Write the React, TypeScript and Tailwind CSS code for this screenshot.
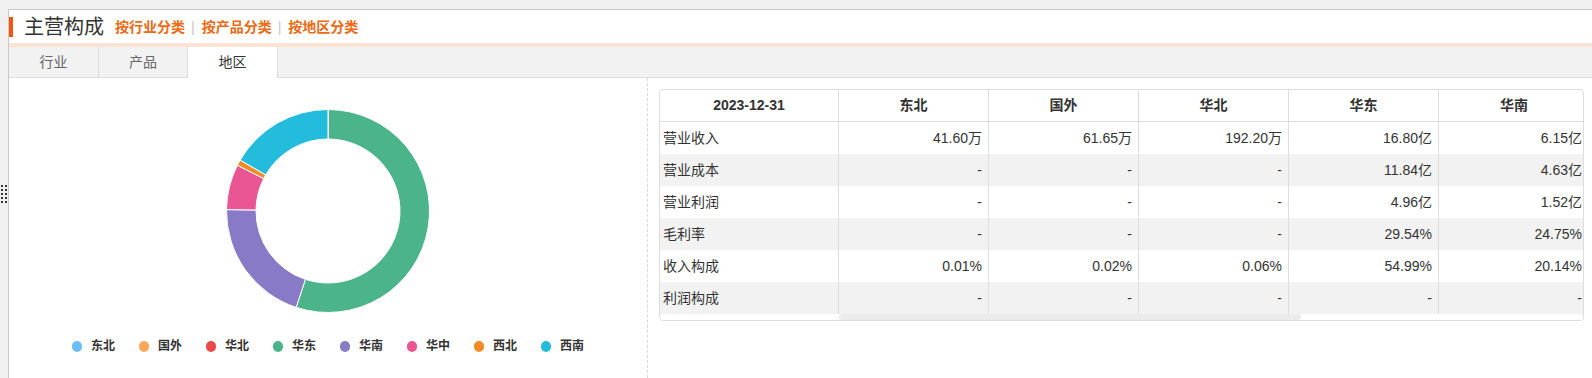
import React from 'react';

const FONT = { fontFamily: '"Liberation Sans", Arial, "Noto Sans CJK SC", sans-serif' };

const regions = [
  { name: '东北', color: '#6dbdf7', share: 0.01 },
  { name: '国外', color: '#fba85b', share: 0.02 },
  { name: '华北', color: '#ec4a4a', share: 0.06 },
  { name: '华东', color: '#4bb48a', share: 54.99 },
  { name: '华南', color: '#887ac6', share: 20.14 },
  { name: '华中', color: '#ea5693', share: 7.21 },
  { name: '西北', color: '#f98b26', share: 0.93 },
  { name: '西南', color: '#23bcdd', share: 16.64 },
];

const rowLabels = ['营业收入', '营业成本', '营业利润', '毛利率', '收入构成', '利润构成'];

// only the columns visible at scroll position 0
const columns: { name: string; values: string[] }[] = [
  { name: '东北', values: ['41.60万', '-', '-', '-', '0.01%', '-'] },
  { name: '国外', values: ['61.65万', '-', '-', '-', '0.02%', '-'] },
  { name: '华北', values: ['192.20万', '-', '-', '-', '0.06%', '-'] },
  { name: '华东', values: ['16.80亿', '11.84亿', '4.96亿', '29.54%', '54.99%', '-'] },
  { name: '华南', values: ['6.15亿', '4.63亿', '1.52亿', '24.75%', '20.14%', '-'] },
];

function Donut() {
  const cx = 105;
  const cy = 105;
  const ro = 101.5;
  const ri = 72;
  const total = regions.reduce((s, r) => s + r.share, 0);
  let acc = 0;
  const pt = (r: number, a: number) => {
    const rad = (a - 90) * (Math.PI / 180);
    return [cx + r * Math.cos(rad), cy + r * Math.sin(rad)];
  };
  return (
    <svg width="210" height="210" viewBox="0 0 210 210">
      {regions.map((r) => {
        const a0 = (acc / total) * 360;
        acc += r.share;
        const a1 = (acc / total) * 360;
        const large = a1 - a0 > 180 ? 1 : 0;
        const [x0, y0] = pt(ro, a0);
        const [x1, y1] = pt(ro, a1);
        const [x2, y2] = pt(ri, a1);
        const [x3, y3] = pt(ri, a0);
        const d = `M${x0} ${y0} A${ro} ${ro} 0 ${large} 1 ${x1} ${y1} L${x2} ${y2} A${ri} ${ri} 0 ${large} 0 ${x3} ${y3} Z`;
        return <path key={r.name} d={d} fill={r.color} stroke="#fff" strokeWidth="1" />;
      })}
    </svg>
  );
}

function Handle() {
  const ys = [185, 189, 193, 197, 201];
  return (
    <div className="absolute left-0 top-0">
      {ys.map((y) => (
        <React.Fragment key={y}>
          <span className="absolute w-[2px] h-[2px] bg-[#333]" style={{ left: 1, top: y }} />
          <span className="absolute w-[2px] h-[2px] bg-[#333]" style={{ left: 5, top: y }} />
        </React.Fragment>
      ))}
    </div>
  );
}

export default function App() {
  return (
    <div className="relative w-[1592px] h-[378px] bg-[#f0f0f0] overflow-hidden text-[#333]" style={FONT}>
      <Handle />
      <div className="ml-[8px] mt-[9px] h-[369px] bg-white border-l border-t border-[#c9c9c9]">
        {/* title */}
        <div className="h-[33px] flex items-center">
          <div className="w-[4px] h-[20px] bg-[#ee5612]" />
          <span className="ml-[11px] text-[20px] leading-none text-[#333]">主营构成</span>
          <div className="ml-[11px] flex items-center text-[14px] font-bold text-[#ee6a12] mt-[2px]">
            <span>按行业分类</span>
            <span className="ml-[6px] mr-[7px] font-normal text-[#c8c8c8]">|</span>
            <span>按产品分类</span>
            <span className="ml-[6px] mr-[7px] font-normal text-[#c8c8c8]">|</span>
            <span>按地区分类</span>
          </div>
        </div>
        <div className="h-[4px] bg-[#fde3d2]" />
        {/* tabs */}
        <div className="h-[31px] flex bg-[#f2f2f2] border-b border-[#dddddd] text-[14px]">
          <div className="w-[90px] border-r border-[#dddddd] flex items-center justify-center text-[#666]">行业</div>
          <div className="w-[89px] border-r border-[#dddddd] flex items-center justify-center text-[#666]">产品</div>
          <div className="w-[90px] h-[31px] border-r border-[#dddddd] bg-white flex items-center justify-center text-[#333]">地区</div>
        </div>
        {/* body */}
        <div className="flex h-[300px]">
          <div className="w-[639px] shrink-0 border-r border-dashed border-[#d8d8d8] flex flex-col items-center">
            <div className="mt-[28px]">
              <Donut />
            </div>
            <div className="mt-[22px] flex items-center">
              {regions.map((r, i) => (
                <div key={r.name} className={`flex items-center ${i > 0 ? 'ml-[24px]' : ''}`}>
                  <span className="w-[10px] h-[11px] rounded-full" style={{ background: r.color }} />
                  <span className="ml-[9px] text-[12px] font-bold text-[#333] leading-[16px]">{r.name}</span>
                </div>
              ))}
            </div>
          </div>
          <div className="pl-[11px] pt-[11px]">
            <div className="w-[925px] border border-[#dddddd] rounded-[4px] overflow-hidden text-[14px]">
              <div className="flex">
                {/* fixed column */}
                <div className="w-[179px] shrink-0 border-r border-[#dddddd]">
                  <div className="h-[32px] border-b border-[#dddddd] flex items-center justify-center font-bold">2023-12-31</div>
                  {rowLabels.map((l, i) => (
                    <div key={l} className={`h-[32px] flex items-center pl-[3px] ${i % 2 === 1 ? 'bg-[#f2f2f2]' : 'bg-white'}`}>{l}</div>
                  ))}
                </div>
                {/* scroll area */}
                <div className="flex-1 flex overflow-hidden">
                  {columns.map((c, ci) => {
                    const last = ci === columns.length - 1;
                    return (
                      <div key={c.name} className={last ? 'flex-1' : 'w-[150px] shrink-0 border-r border-[#dddddd]'}>
                        <div className={`h-[32px] border-b border-[#dddddd] flex items-center justify-center font-bold ${last ? 'pl-[6px]' : ''}`}>{c.name}</div>
                        {c.values.map((v, i) => (
                          <div key={i} className={`h-[32px] flex items-center justify-end ${last ? 'pr-[1px]' : 'pr-[6px]'} ${i % 2 === 1 ? 'bg-[#f2f2f2]' : 'bg-white'}`}>{v}</div>
                        ))}
                      </div>
                    );
                  })}
                </div>
              </div>
              {/* horizontal scrollbar */}
              <div className="h-[6px] flex bg-white">
                <div className="w-[179px] shrink-0" />
                <div className="w-[462px] h-[6px] bg-[#ebebeb] rounded-[3px]" />
              </div>
            </div>
          </div>
        </div>
      </div>
    </div>
  );
}
